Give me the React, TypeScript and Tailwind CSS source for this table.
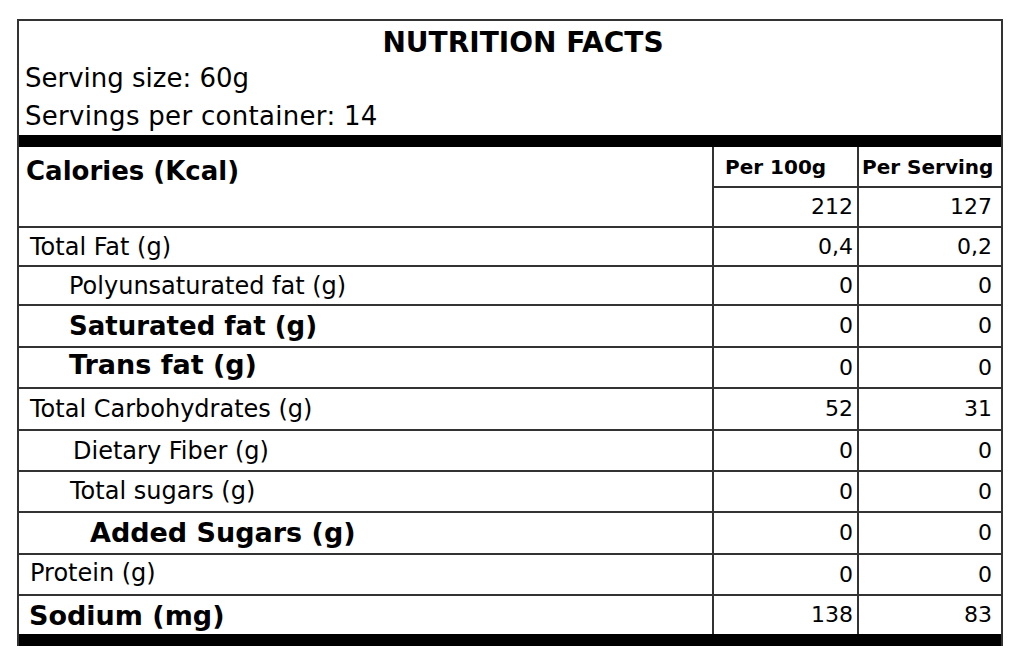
import React from "react";

type Row = {
  label: string;
  bold?: boolean;
  indent: string;
  h: string;
  per100: string;
  perServing: string;
  shift?: string;
  size?: string;
  last?: boolean;
};

const rows: Row[] = [
  { label: "Total Fat (g)", indent: "pl-[11px]", h: "h-[39px]", per100: "0,4", perServing: "0,2" },
  { label: "Polyunsaturated fat (g)", indent: "pl-[50px]", h: "h-[39px]", per100: "0", perServing: "0" },
  { label: "Saturated fat (g)", bold: true, size: "text-[26px]", indent: "pl-[50px]", h: "h-[42px]", per100: "0", perServing: "0" },
  { label: "Trans fat (g)", bold: true, indent: "pl-[50px]", h: "h-[41px]", per100: "0", perServing: "0", shift: "pb-[6px]" },
  { label: "Total Carbohydrates (g)", indent: "pl-[11px]", h: "h-[42px]", per100: "52", perServing: "31" },
  { label: "Dietary Fiber (g)", indent: "pl-[54px]", h: "h-[41px]", per100: "0", perServing: "0" },
  { label: "Total sugars (g)", indent: "pl-[51px]", h: "h-[41px]", per100: "0", perServing: "0", shift: "pb-[2px]" },
  { label: "Added Sugars (g)", bold: true, indent: "pl-[71px]", h: "h-[42px]", per100: "0", perServing: "0", shift: "pb-[2px]" },
  { label: "Protein (g)", indent: "pl-[11px]", h: "h-[41px]", per100: "0", perServing: "0", shift: "pb-[4px]" },
  { label: "Sodium (mg)", bold: true, indent: "pl-[10px]", h: "h-[38px]", per100: "138", perServing: "83", last: true },
];

function NutrientRow({ row }: { row: Row }) {
  const labelSize = row.size ?? (row.bold ? "text-[27px]" : "text-[24px]");
  return (
    <div className={`flex ${row.h} ${row.last ? "" : "border-b-2 border-[#333]"}`}>
      <div
        className={`flex flex-1 items-center ${row.indent} ${row.shift ?? ""} ${labelSize} ${
          row.bold ? "font-bold" : ""
        } leading-none`}
      >
        {row.label}
      </div>
      <div className="flex w-[145px] items-center justify-end border-l-2 border-[#333] pr-[4px] text-[22px] leading-none">
        {row.per100}
      </div>
      <div className="flex w-[144px] items-center justify-end border-l-2 border-[#333] pr-[9px] text-[22px] leading-none">
        {row.perServing}
      </div>
    </div>
  );
}

export default function App() {
  return (
    <div className="min-h-screen bg-white pt-[19px] pl-[17px] text-black [font-family:'DejaVu_Sans',sans-serif]">
      <div className="w-[986px] border-2 border-b-0 border-[#333]">
        <div className="pt-[6px]">
          <div className="h-[32px] pl-[26px] text-center text-[28px] font-bold leading-[32px]">
            NUTRITION FACTS
          </div>
          <div className="h-[38px] pl-[6px] text-[26px] leading-[38px]">Serving size: 60g</div>
          <div className="h-[38px] pl-[6px] text-[26px] tracking-[0.3px] leading-[38px]">Servings per container: 14</div>
        </div>
        <div className="h-[12px] bg-black" />

        {/* header: calories spans two lines */}
        <div className="flex border-b-2 border-[#333]">
          <div className="flex-1 pt-[8px] pl-[7px] text-[26px] font-bold leading-[32px]">Calories (Kcal)</div>
          <div className="flex w-[289px] flex-col">
            <div className="flex h-[41px] border-b-2 border-[#333]">
              <div className="flex w-[145px] items-center border-l-2 border-[#333] pl-[11px] text-[20px] font-bold leading-none">
                Per 100g
              </div>
              <div className="flex w-[144px] items-center border-l-2 border-[#333] pl-[3px] text-[20px] font-bold leading-none">
                Per Serving
              </div>
            </div>
            <div className="flex h-[38px]">
              <div className="flex w-[145px] items-center justify-end border-l-2 border-[#333] pr-[4px] text-[22px] leading-none">
                212
              </div>
              <div className="flex w-[144px] items-center justify-end border-l-2 border-[#333] pr-[9px] text-[22px] leading-none">
                127
              </div>
            </div>
          </div>
        </div>

        {rows.map((r) => (
          <NutrientRow key={r.label} row={r} />
        ))}

        <div className="h-[12px] bg-black" />
      </div>
    </div>
  );
}
